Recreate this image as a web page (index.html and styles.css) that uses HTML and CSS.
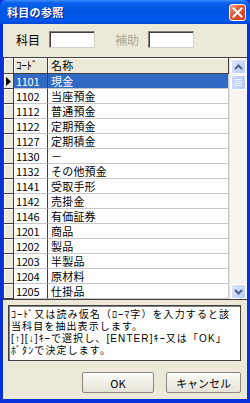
FILE: index.html
```html
<!DOCTYPE html>
<html lang="ja">

<head>
  <meta charset="UTF-8">
  <meta name="viewport" content="width=device-width, initial-scale=1.0">
  <title>科目の参照</title>
  <link rel="stylesheet" href="styles.css">
</head>

<body>
  <div class="window">
    <div class="titlebar">
      <span class="title">科目の参照</span>
      <span class="close">
        <svg width="11" height="11" viewBox="0 0 11 11">
          <path d="M1.5 1.5 L9.5 9.5 M9.5 1.5 L1.5 9.5" stroke="#fff" stroke-width="2" stroke-linecap="square" />
        </svg>
      </span>
    </div>

    <div class="content">
      <div class="fields">
        <span class="lbl">科目</span>
        <span class="box"></span>
        <span class="lbl off">補助</span>
        <span class="box"></span>
      </div>

      <div class="grid">
        <div class="grid-main">
          <div class="row head">
            <div class="ind"></div>
            <div class="code">ｺｰﾄﾞ</div>
            <div class="name">名称</div>
          </div>
          <div class="row sel">
            <div class="ind">
              <svg width="5" height="9" viewBox="0 0 5 9"><path d="M0 0 L5 4.5 L0 9 Z" fill="#000" /></svg>
            </div>
            <div class="code">1101</div>
            <div class="name">現金</div>
          </div>
          <div class="row"><div class="ind"></div><div class="code">1102</div><div class="name">当座預金</div></div>
          <div class="row"><div class="ind"></div><div class="code">1112</div><div class="name">普通預金</div></div>
          <div class="row"><div class="ind"></div><div class="code">1122</div><div class="name">定期預金</div></div>
          <div class="row"><div class="ind"></div><div class="code">1127</div><div class="name">定期積金</div></div>
          <div class="row"><div class="ind"></div><div class="code">1130</div><div class="name">－</div></div>
          <div class="row"><div class="ind"></div><div class="code">1132</div><div class="name">その他預金</div></div>
          <div class="row"><div class="ind"></div><div class="code">1141</div><div class="name">受取手形</div></div>
          <div class="row"><div class="ind"></div><div class="code">1142</div><div class="name">売掛金</div></div>
          <div class="row"><div class="ind"></div><div class="code">1146</div><div class="name">有価証券</div></div>
          <div class="row"><div class="ind"></div><div class="code">1201</div><div class="name">商品</div></div>
          <div class="row"><div class="ind"></div><div class="code">1202</div><div class="name">製品</div></div>
          <div class="row"><div class="ind"></div><div class="code">1203</div><div class="name">半製品</div></div>
          <div class="row"><div class="ind"></div><div class="code">1204</div><div class="name">原材料</div></div>
          <div class="row"><div class="ind"></div><div class="code">1205</div><div class="name">仕掛品</div></div>
        </div>

        <!-- スクロールバー -->
        <div class="scrollbar">
          <div class="sb-btn">
            <svg width="9" height="6" viewBox="0 0 9 6"><path d="M1 5 L4.5 1.5 L8 5" fill="none" stroke="#4d6185" stroke-width="2" /></svg>
          </div>
          <div class="sb-thumb">
            <i></i><i></i><i></i><i></i>
          </div>
          <div class="sb-track"></div>
          <div class="sb-btn">
            <svg width="9" height="6" viewBox="0 0 9 6"><path d="M1 1 L4.5 4.5 L8 1" fill="none" stroke="#4d6185" stroke-width="2" /></svg>
          </div>
        </div>
      </div>

      <div class="memo">
        <p>ｺｰﾄﾞ又は読み仮名（ﾛｰﾏ字）を入力すると該</p>
        <p>当科目を抽出表示します。</p>
        <p>[↑][↓]ｷｰで選択し、[ENTER]ｷｰ又は「OK」</p>
        <p>ﾎﾞﾀﾝで決定します。</p>
      </div>

      <div class="buttons">
        <button class="btn ok">OK</button>
        <button class="btn cancel">キャンセル</button>
      </div>
    </div>
  </div>
</body>

</html>
```

FILE: styles.css
```css
body {
  margin: 0;
  font-family: "Noto Sans CJK JP", "Noto Sans", sans-serif;
}

.window {
  width: 250px;
  height: 403px;
  display: flex;
  flex-direction: column;
  background: #0831d9;
  box-sizing: border-box;
  padding: 0 3px 4px 3px;
}

.titlebar {
  height: 24px;
  margin: 0 -3px;
  padding: 0 4px 0 7px;
  display: flex;
  align-items: center;
  justify-content: space-between;
  background: linear-gradient(#3a8cff 0%, #0b61eb 12%, #0054e3 45%, #0058ee 85%, #0046d4 100%);
  border-radius: 6px 6px 0 0;
}

.title {
  color: white;
  font-size: 11px;
  font-weight: bold;
  letter-spacing: 0.3px;
  text-shadow: 1px 1px #0a1e8c;
}

.close {
  width: 17px;
  height: 17px;
  box-sizing: border-box;
  border: 1px solid white;
  border-radius: 3px;
  background: linear-gradient(135deg, #f0a58c 0%, #e35a35 40%, #c8381a 100%);
  display: flex;
  align-items: center;
  justify-content: center;
}

.content {
  flex: 1;
  background: #ece9d8;
  display: flex;
  flex-direction: column;
}

.fields {
  display: flex;
  align-items: center;
  height: 17px;
  margin-top: 7px;
  padding-left: 13px;
}

.lbl {
  font-size: 12px;
  width: 33px;
  color: #000;
}

.lbl.off {
  color: #aca899;
  margin-left: 20px;
}

.box {
  width: 46px;
  height: 17px;
  box-sizing: border-box;
  background: white;
  border: 1px solid #7f7f7f;
  border-right-color: #d4d0c8;
  border-bottom-color: #d4d0c8;
  box-shadow: inset 1px 1px #404040;
}

.grid {
  margin-top: 9px;
  display: flex;
  border-top: 1px solid #404040;
  border-left: 1px solid #404040;
  border-bottom: 1px solid #404040;
  background: white;
}

.grid-main {
  flex: 1;
}

.row {
  display: grid;
  grid-template-columns: 10px 34px 1fr;
  height: 15px;
  font-size: 11px;
}

.row > div {
  box-sizing: border-box;
  border-bottom: 1px solid #c8c8c8;
  border-right: 1px solid #c8c8c8;
  line-height: 14px;
  white-space: nowrap;
}

.row .ind {
  background: #ece9d8;
  border-right: 1px solid #404040;
  border-bottom: 1px solid #404040;
  box-shadow: inset 1px 1px #fff;
  display: flex;
  align-items: center;
  padding-left: 2px;
}

.row .code {
  padding-left: 2px;
  letter-spacing: -0.3px;
  border-right-color: #404040;
}

.row .name {
  padding-left: 3px;
  letter-spacing: 0.2px;
}

.row.head {
  height: 16px;
}

.row.head > div {
  background: #ece9d8;
  border-right: 1px solid #404040;
  border-bottom: 1px solid #404040;
  box-shadow: inset 1px 1px #fff;
  line-height: 15px;
}

.row.sel .code,
.row.sel .name {
  background: #316ac5;
  color: white;
}

.scrollbar {
  width: 17px;
  display: flex;
  flex-direction: column;
  background: #f6f5f0;
  border-left: 1px solid #e8e6dc;
}

.sb-btn {
  height: 15px;
  margin: 1px 1px 0 1px;
  border-radius: 2px;
  border: 1px solid #fff;
  background: linear-gradient(135deg, #dde6fd, #b9cbf7);
  display: flex;
  align-items: center;
  justify-content: center;
  box-sizing: border-box;
}

.sb-thumb {
  height: 15px;
  margin: 1px 1px 0 1px;
  border-radius: 2px;
  border: 1px solid #fff;
  background: linear-gradient(90deg, #c9d8fc, #b6c9f6);
  display: flex;
  flex-direction: column;
  align-items: center;
  justify-content: center;
  gap: 1px;
  box-sizing: border-box;
}

.sb-thumb i {
  display: block;
  width: 7px;
  height: 1px;
  background: #eef3ff;
}

.sb-track {
  flex: 1;
}

.memo {
  margin: 5px 6px 0 5px;
  height: 56px;
  box-sizing: border-box;
  background: white;
  border: 1px solid #404040;
  box-shadow: inset 1px 1px #808080;
  padding: 3px 2px;
  font-family: "Liberation Sans", "Noto Sans CJK JP", sans-serif;
  font-size: 10px;
  letter-spacing: 1.1px;
  white-space: nowrap;
  overflow: hidden;
}

.memo p {
  margin: 0;
  height: 12px;
  line-height: 12px;
}

.buttons {
  display: flex;
  justify-content: flex-end;
  gap: 12px;
  margin-top: 11px;
  padding-right: 6px;
}

.btn {
  height: 21px;
  font-family: "Noto Sans CJK JP", sans-serif;
  font-size: 11px;
  background: linear-gradient(#fbfbf8, #e6e3d6);
  border: 1px solid #8c8a80;
  border-radius: 2px;
  padding: 0;
}

.btn.ok {
  width: 72px;
}

.btn.cancel {
  width: 75px;
}
```
